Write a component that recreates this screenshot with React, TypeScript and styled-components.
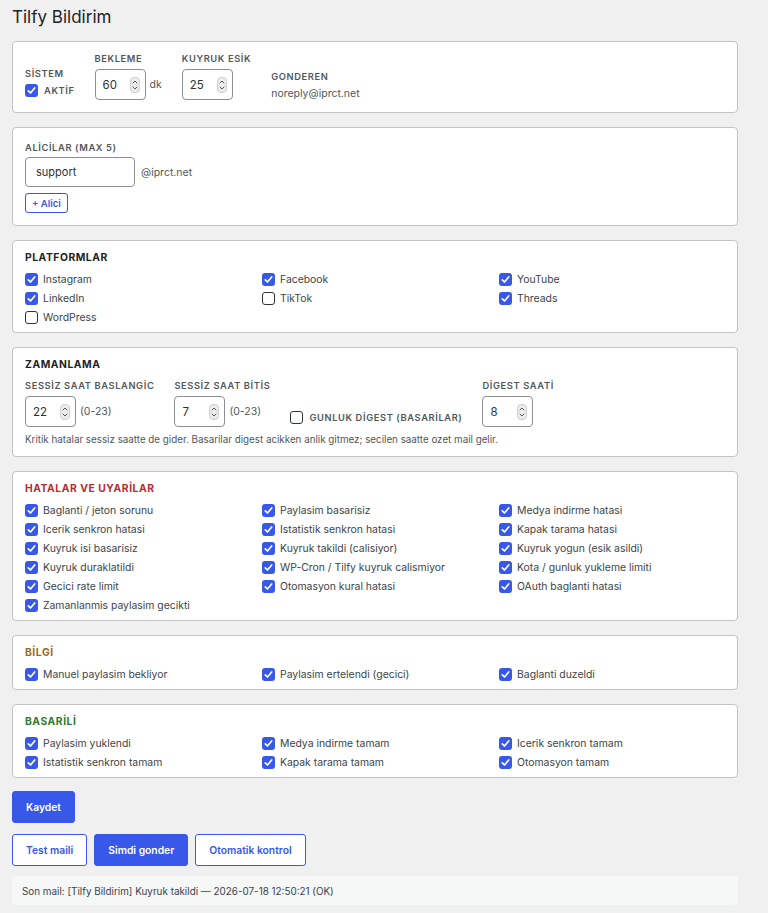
import React from 'react';
import styled, { createGlobalStyle } from 'styled-components';

const GlobalStyle = createGlobalStyle`
    body {
        margin: 0;
        background: #f0f0f1;
        font-family: Inter, "Liberation Sans", Arial, sans-serif;
        color: #3c434a;
    }
`;

const BLUE = '#3858e9';

const Page = styled.div`
    width: 768px;
    box-sizing: border-box;
    padding: 6px 30px 0 12px;
`;

const Title = styled.h1`
    margin: 0 0 13px;
    font-size: 17px;
    line-height: 22px;
    font-weight: 400;
    color: #1d2327;
`;

const Stack = styled.div`
    display: flex;
    flex-direction: column;
    gap: 14px;
`;

const Panel = styled.section<{ $pad?: string }>`
    background: #fff;
    border: 1px solid #c3c4c7;
    border-radius: 4px;
    padding: ${(p) => p.$pad || '9px 12px 5px'};
`;

const SectionTitle = styled.h2<{ $color?: string; $gap?: number }>`
    margin: 0 0 ${(p) => (p.$gap ?? 6)}px;
    font-size: 10.3px;
    line-height: 14px;
    font-weight: 700;
    letter-spacing: 0.55px;
    color: ${(p) => p.$color || '#1d2327'};
`;

const FieldLabel = styled.div<{ $gap?: number }>`
    font-size: 9.3px;
    line-height: 13px;
    font-weight: 600;
    letter-spacing: 0.62px;
    color: #50575e;
    margin-bottom: ${(p) => (p.$gap ?? 4)}px;
    white-space: nowrap;
`;

const FieldsRow = styled.div`
    display: flex;
    align-items: flex-end;
    gap: 20px;
`;

const Field = styled.div`
    display: flex;
    flex-direction: column;
`;

const Inline = styled.div`
    display: flex;
    align-items: center;
    gap: 4px;
`;

const Hint = styled.span`
    font-size: 10.5px;
    color: #50575e;
`;

const NumberBox = styled.div<{ $w?: number }>`
    width: ${(p) => p.$w || 51}px;
    height: 31px;
    box-sizing: border-box;
    display: flex;
    align-items: center;
    border: 1px solid #8c8f94;
    border-radius: 4px;
    background: #fff;
    padding: 0 5px 0 7px;
`;

const BoxInput = styled.input`
    flex: 1;
    width: 0;
    border: none;
    outline: none;
    padding: 0;
    background: transparent;
    font-family: inherit;
    font-size: 11.5px;
    color: #2c3338;
`;

const TextBox = styled.input`
    width: 110px;
    height: 30px;
    box-sizing: border-box;
    border: 1px solid #8c8f94;
    border-radius: 4px;
    padding: 0 10px;
    font-family: inherit;
    font-size: 11px;
    color: #2c3338;
    outline: none;
`;

const Value = styled.div`
    font-size: 10.5px;
    line-height: 13px;
    color: #50575e;
`;

const CheckGrid = styled.div`
    display: grid;
    grid-template-columns: repeat(3, 1fr);
    column-gap: 11px;
`;

const CheckRow = styled.label<{ $caps?: boolean }>`
    display: flex;
    align-items: center;
    gap: ${(p) => (p.$caps ? '6px' : '5px')};
    height: ${(p) => (p.$caps ? '20px' : '19px')};
    font-size: ${(p) => (p.$caps ? '9.3px' : '10.4px')};
    font-weight: ${(p) => (p.$caps ? 600 : 400)};
    letter-spacing: ${(p) => (p.$caps ? '0.62px' : '0')};
    color: ${(p) => (p.$caps ? '#50575e' : '#3c434a')};
    white-space: nowrap;
`;

const Box = styled.span<{ $checked: boolean }>`
    flex: none;
    width: 13px;
    height: 13px;
    box-sizing: border-box;
    border-radius: 3px;
    display: flex;
    align-items: center;
    justify-content: center;
    background: ${(p) => (p.$checked ? BLUE : '#fff')};
    border: ${(p) => (p.$checked ? 'none' : '1.2px solid #2c3338')};
`;

const HelpText = styled.p`
    margin: 6px 0 0;
    font-size: 9.8px;
    line-height: 13px;
    color: #50575e;
`;

const SmallButton = styled.button`
    align-self: flex-start;
    height: 20px;
    margin-top: 6px;
    padding: 0 6px;
    border: 1px solid ${BLUE};
    border-radius: 3px;
    background: #fff;
    color: ${BLUE};
    font-family: inherit;
    font-size: 9.5px;
    font-weight: 600;
`;

const Recipient = styled.div`
    display: flex;
    align-items: center;
    gap: 6px;
`;

const Button = styled.button<{ $primary?: boolean }>`
    height: 32px;
    padding: 0 13px;
    border-radius: 3px;
    border: 1px solid ${BLUE};
    background: ${(p) => (p.$primary ? BLUE : '#fff')};
    color: ${(p) => (p.$primary ? '#fff' : BLUE)};
    font-family: inherit;
    font-size: 10.3px;
    font-weight: 600;
`;

const SaveRow = styled.div`
    margin-top: 13px;
`;

const ButtonRow = styled.div`
    display: flex;
    gap: 7px;
    margin-top: 11px;
`;

const Status = styled.div`
    margin-top: 10px;
    height: 29px;
    display: flex;
    align-items: center;
    padding: 0 10px;
    background: #f6f7f7;
    border-radius: 4px;
    font-size: 9.9px;
    color: #3c434a;
`;

const Spinner = () => (
    <svg width="10" height="16" viewBox="0 0 10 16">
        <rect x="0.5" y="0.5" width="9" height="15" rx="3.5" fill="#ececec" stroke="#d0d0d0" />
        <path d="M3 6 L5 4 L7 6" fill="none" stroke="#555" strokeWidth="1" strokeLinecap="round" />
        <path d="M3 10 L5 12 L7 10" fill="none" stroke="#555" strokeWidth="1" strokeLinecap="round" />
    </svg>
);

const NumberInput = ({ value, width }: { value: string; width?: number }) => (
    <NumberBox $w={width}>
        <BoxInput defaultValue={value} />
        <Spinner />
    </NumberBox>
);

const Check = ({ label, checked = true, caps }: { label: string; checked?: boolean; caps?: boolean }) => (
    <CheckRow $caps={caps}>
        <Box $checked={checked}>
            {checked && (
                <svg width="9" height="9" viewBox="0 0 9 9">
                    <path d="M1.3 4.8 L3.5 7 L7.7 2" fill="none" stroke="#fff" strokeWidth="1.7" strokeLinecap="round" strokeLinejoin="round" />
                </svg>
            )}
        </Box>
        {label}
    </CheckRow>
);

type Item = [string, boolean?];

const CheckSection = ({ title, color, items }: { title: string; color?: string; items: Item[] }) => (
    <Panel>
        <SectionTitle $color={color}>{title}</SectionTitle>
        <CheckGrid>
            {items.map(([label, checked]) => (
                <Check key={label} label={label} checked={checked !== false} />
            ))}
        </CheckGrid>
    </Panel>
);

const platforms: Item[] = [
    ['Instagram'], ['Facebook'], ['YouTube'],
    ['LinkedIn'], ['TikTok', false], ['Threads'],
    ['WordPress', false],
];

const errors: Item[] = [
    ['Baglanti / jeton sorunu'], ['Paylasim basarisiz'], ['Medya indirme hatasi'],
    ['Icerik senkron hatasi'], ['Istatistik senkron hatasi'], ['Kapak tarama hatasi'],
    ['Kuyruk isi basarisiz'], ['Kuyruk takildi (calisiyor)'], ['Kuyruk yogun (esik asildi)'],
    ['Kuyruk duraklatildi'], ['WP-Cron / Tilfy kuyruk calismiyor'], ['Kota / gunluk yukleme limiti'],
    ['Gecici rate limit'], ['Otomasyon kural hatasi'], ['OAuth baglanti hatasi'],
    ['Zamanlanmis paylasim gecikti'],
];

const info: Item[] = [
    ['Manuel paylasim bekliyor'], ['Paylasim ertelendi (gecici)'], ['Baglanti duzeldi'],
];

const success: Item[] = [
    ['Paylasim yuklendi'], ['Medya indirme tamam'], ['Icerik senkron tamam'],
    ['Istatistik senkron tamam'], ['Kapak tarama tamam'], ['Otomasyon tamam'],
];

export default function App() {
    return (
        <Page>
            <GlobalStyle />
            <Title>Tilfy Bildirim</Title>
            <Stack>
                <Panel $pad="10px 12px 12px">
                    <FieldsRow>
                        <Field>
                            <FieldLabel $gap={0}>SİSTEM</FieldLabel>
                            <Check label="AKTİF" caps />
                        </Field>
                        <Field>
                            <FieldLabel>BEKLEME</FieldLabel>
                            <Inline>
                                <NumberInput value="60" />
                                <Hint>dk</Hint>
                            </Inline>
                        </Field>
                        <Field>
                            <FieldLabel>KUYRUK ESİK</FieldLabel>
                            <NumberInput value="25" />
                        </Field>
                        <Field>
                            <FieldLabel>GONDEREN</FieldLabel>
                            <Value>noreply@iprct.net</Value>
                        </Field>
                    </FieldsRow>
                </Panel>

                <Panel $pad="13px 12px 12px">
                    <FieldLabel $gap={3}>ALİCİLAR (MAX 5)</FieldLabel>
                    <Field>
                        <Recipient>
                            <TextBox defaultValue="support" />
                            <Hint>@iprct.net</Hint>
                        </Recipient>
                        <SmallButton>+ Alici</SmallButton>
                    </Field>
                </Panel>

                <CheckSection title="PLATFORMLAR" items={platforms} />

                <Panel $pad="9px 12px 10px">
                    <SectionTitle $gap={8}>ZAMANLAMA</SectionTitle>
                    <FieldsRow>
                        <Field>
                            <FieldLabel>SESSİZ SAAT BASLANGİC</FieldLabel>
                            <Inline>
                                <NumberInput value="22" />
                                <Hint>(0-23)</Hint>
                            </Inline>
                        </Field>
                        <Field>
                            <FieldLabel>SESSİZ SAAT BİTİS</FieldLabel>
                            <Inline>
                                <NumberInput value="7" />
                                <Hint>(0-23)</Hint>
                            </Inline>
                        </Field>
                        <Field>
                            <Check label="GUNLUK DİGEST (BASARİLAR)" checked={false} caps />
                        </Field>
                        <Field>
                            <FieldLabel>DİGEST SAATİ</FieldLabel>
                            <NumberInput value="8" />
                        </Field>
                    </FieldsRow>
                    <HelpText>
                        Kritik hatalar sessiz saatte de gider. Basarilar digest acikken anlik gitmez; secilen saatte ozet mail gelir.
                    </HelpText>
                </Panel>

                <CheckSection title="HATALAR VE UYARİLAR" color="#b32d2e" items={errors} />
                <CheckSection title="BİLGİ" color="#9a6a1c" items={info} />
                <CheckSection title="BASARİLİ" color="#2f7a2f" items={success} />
            </Stack>

            <SaveRow>
                <Button $primary>Kaydet</Button>
            </SaveRow>
            <ButtonRow>
                <Button>Test maili</Button>
                <Button $primary>Simdi gonder</Button>
                <Button>Otomatik kontrol</Button>
            </ButtonRow>
            <Status>Son mail: [Tilfy Bildirim] Kuyruk takildi — 2026-07-18 12:50:21 (OK)</Status>
        </Page>
    );
}
